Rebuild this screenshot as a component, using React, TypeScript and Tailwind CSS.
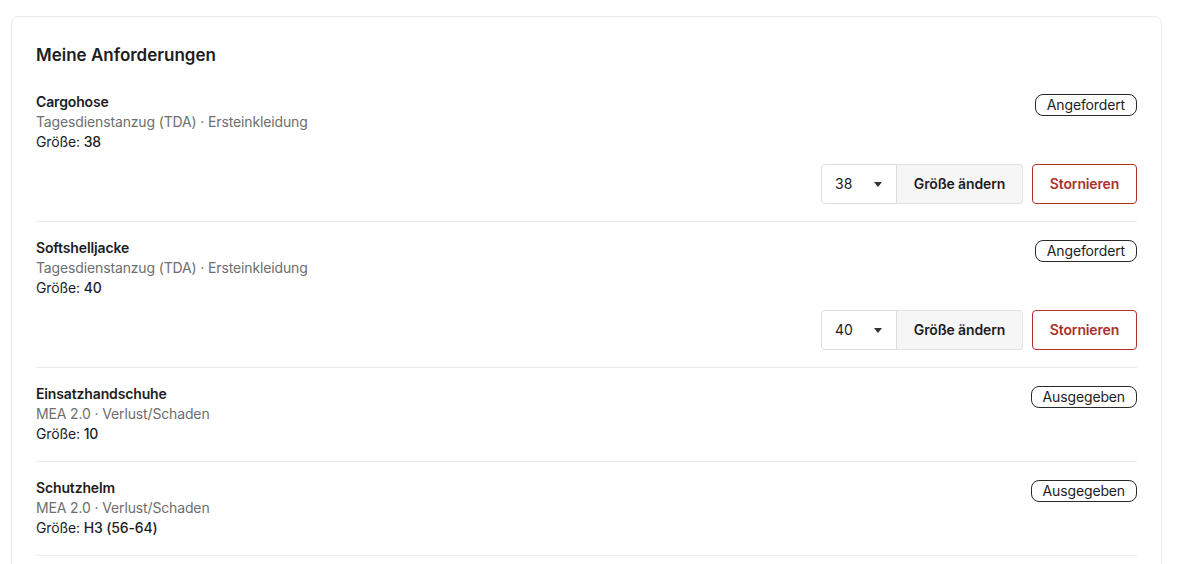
type Item = {
  name: string;
  meta: string;
  size: string;
  status: string;
  editable: boolean;
};

const items: Item[] = [
  { name: "Cargohose", meta: "Tagesdienstanzug (TDA) · Ersteinkleidung", size: "38", status: "Angefordert", editable: true },
  { name: "Softshelljacke", meta: "Tagesdienstanzug (TDA) · Ersteinkleidung", size: "40", status: "Angefordert", editable: true },
  { name: "Einsatzhandschuhe", meta: "MEA 2.0 · Verlust/Schaden", size: "10", status: "Ausgegeben", editable: false },
  { name: "Schutzhelm", meta: "MEA 2.0 · Verlust/Schaden", size: "H3 (56-64)", status: "Ausgegeben", editable: false },
];

const RequestRow = ({ item }: { item: Item }) => {
  return (
    <div className="border-b border-[#e9e9e9] pt-4 pb-[17px]">
      <div className="flex justify-between items-start">
        <div className="text-sm leading-5 tracking-[-0.01em]">
          <div className="font-semibold text-[#1d1d1f]">{item.name}</div>
          <div className="text-[#6e6e6e]">{item.meta}</div>
          <div className="text-[#1d1d1f]">
            Größe: <span className="font-medium">{item.size}</span>
          </div>
        </div>
        <span className="mt-[2px] rounded-lg border border-[#2a2a2a] px-[11px] text-sm leading-5 tracking-[-0.01em] text-[#1d1d1f]">
          {item.status}
        </span>
      </div>
      {item.editable && (
        <div className="flex justify-end gap-[9px] mt-3">
          <div className="flex h-10">
            <div className="flex items-center justify-between w-[76px] pl-[13px] pr-[14px] border border-[#dcdcdc] rounded-l bg-white text-sm text-[#1d1d1f]">
              <span>{item.size}</span>
              <svg width="8" height="5" viewBox="0 0 8 5" className="fill-[#333]">
                <path d="M0 0h8L4 5z" />
              </svg>
            </div>
            <button className="w-[126px] border border-l-0 border-[#e3e3e3] rounded-r bg-[#f6f6f6] text-sm font-semibold tracking-[-0.01em] text-[#1d1d1f]">
              Größe ändern
            </button>
          </div>
          <button className="h-10 w-[105px] rounded border border-[#b3322a] bg-white text-sm font-semibold tracking-[-0.01em] text-[#a8322a]">
            Stornieren
          </button>
        </div>
      )}
    </div>
  );
};

const App = () => {
  return (
    <div className="min-h-screen bg-white pt-4 pl-[11px] pr-[23px] font-['Inter',sans-serif]">
      <section className="rounded-lg border border-[#ebebeb] bg-white px-6 pt-6 pb-6 shadow-[0_1px_3px_rgba(0,0,0,0.04)]">
        <h2 className="text-[17px] leading-7 font-semibold text-[#1d1d1f] mb-[7px]">
          Meine Anforderungen
        </h2>
        {items.map((item) => (
          <RequestRow key={item.name} item={item} />
        ))}
      </section>
    </div>
  );
};

export default App;
